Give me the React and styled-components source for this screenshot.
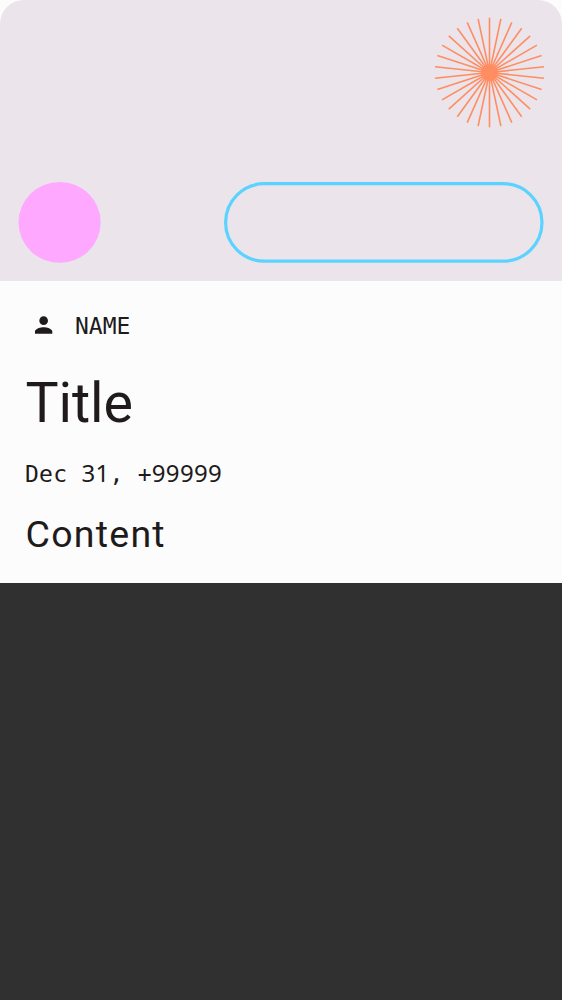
import React from 'react';
import styled, { createGlobalStyle } from 'styled-components';

const GlobalStyle = createGlobalStyle`
  * { box-sizing: border-box; }
  body { margin: 0; background: #303030; }
`;

const Card = styled.article`
  width: 100%;
  height: 583px;
  display: flex;
  flex-direction: column;
  background: #fcfcfc;
  color: #201a1b;
`;

const Cover = styled.header`
  height: 281px;
  padding: 17px 18px 18px;
  display: flex;
  flex-direction: column;
  justify-content: space-between;
  background: #ebe4eb;
  border-radius: 24px 24px 0 0;
`;

const Burst = styled.svg`
  width: 111px;
  height: 111px;
  margin-right: -1px;
  align-self: flex-end;
  flex: none;
`;

const Shapes = styled.div`
  display: flex;
  justify-content: space-between;
`;

const Disc = styled.svg`
  width: 83px;
  height: 81px;
  fill: #ffa8ff;
`;

const Pill = styled.svg`
  width: 320px;
  height: 81px;
  fill: none;
  stroke: #5ad3ff;
  stroke-width: 3.2px;
`;

const Details = styled.section`
  padding: 31px 25px 0;
  display: flex;
  flex-direction: column;
`;

const Author = styled.div`
  height: 28px;
  display: flex;
  align-items: center;
`;

const Person = styled.svg`
  width: 26px;
  height: 26px;
  margin: 0 19px 3px 5px;
  fill: currentColor;
`;

const Mono = styled.span`
  font: 23px/28px 'DejaVu Sans Mono', monospace;
  letter-spacing: ${(p) => p.$tracking || '0'};
  white-space: pre;
`;

const Digits = styled.span`
  font: 24px/28px 'Noto Sans', sans-serif;
  letter-spacing: 0.32px;
`;

const Title = styled.h1`
  margin: 29px 0 0 0.5px;
  font: 400 55.6px/68px Roboto, sans-serif;
  letter-spacing: -0.1px;
`;

const Stamp = styled(Mono)`
  height: 28px;
  margin-top: 22px;
`;

const Content = styled.p`
  margin: 25px 0 0 0.5px;
  font: 400 37.5px/44px Roboto, sans-serif;
  letter-spacing: 1.25px;
`;

const rays = Array.from({ length: 30 }, (_, i) => i * 12);

export default function App() {
  return (
    <>
      <GlobalStyle />
      <Card>
        <Cover>
          <Burst viewBox="-55.5 -55.5 111 111">
            <g stroke="#ff8d62" strokeWidth="1.6">
              {rays.map((a) => (
                <line key={a} y2="-54.8" transform={`rotate(${a})`} />
              ))}
            </g>
            <circle r="8.6" fill="#ff8d62" />
          </Burst>
          <Shapes>
            <Disc viewBox="0 0 83 81">
              <ellipse cx="41.6" cy="40.4" rx="41.1" ry="40.4" />
            </Disc>
            <Pill viewBox="0 0 320 81">
              <rect x="1.6" y="1.7" width="316.4" height="77.4" rx="38.7" />
            </Pill>
          </Shapes>
        </Cover>
        <Details>
          <Author>
            <Person viewBox="-0.6 0 24 24">
              <path d="M12 12c2.21 0 4-1.79 4-4s-1.79-4-4-4-4 1.79-4 4 1.79 4 4 4zm0 2c-2.67 0-8 1.34-8 4v2h16v-2c0-2.66-5.33-4-8-4z" />
            </Person>
            <Mono>NAME</Mono>
          </Author>
          <Title>Title</Title>
          <Stamp $tracking="0.25px">
            Dec <Digits>31</Digits>, +<Digits>99999</Digits>
          </Stamp>
          <Content>Content</Content>
        </Details>
      </Card>
    </>
  );
}
